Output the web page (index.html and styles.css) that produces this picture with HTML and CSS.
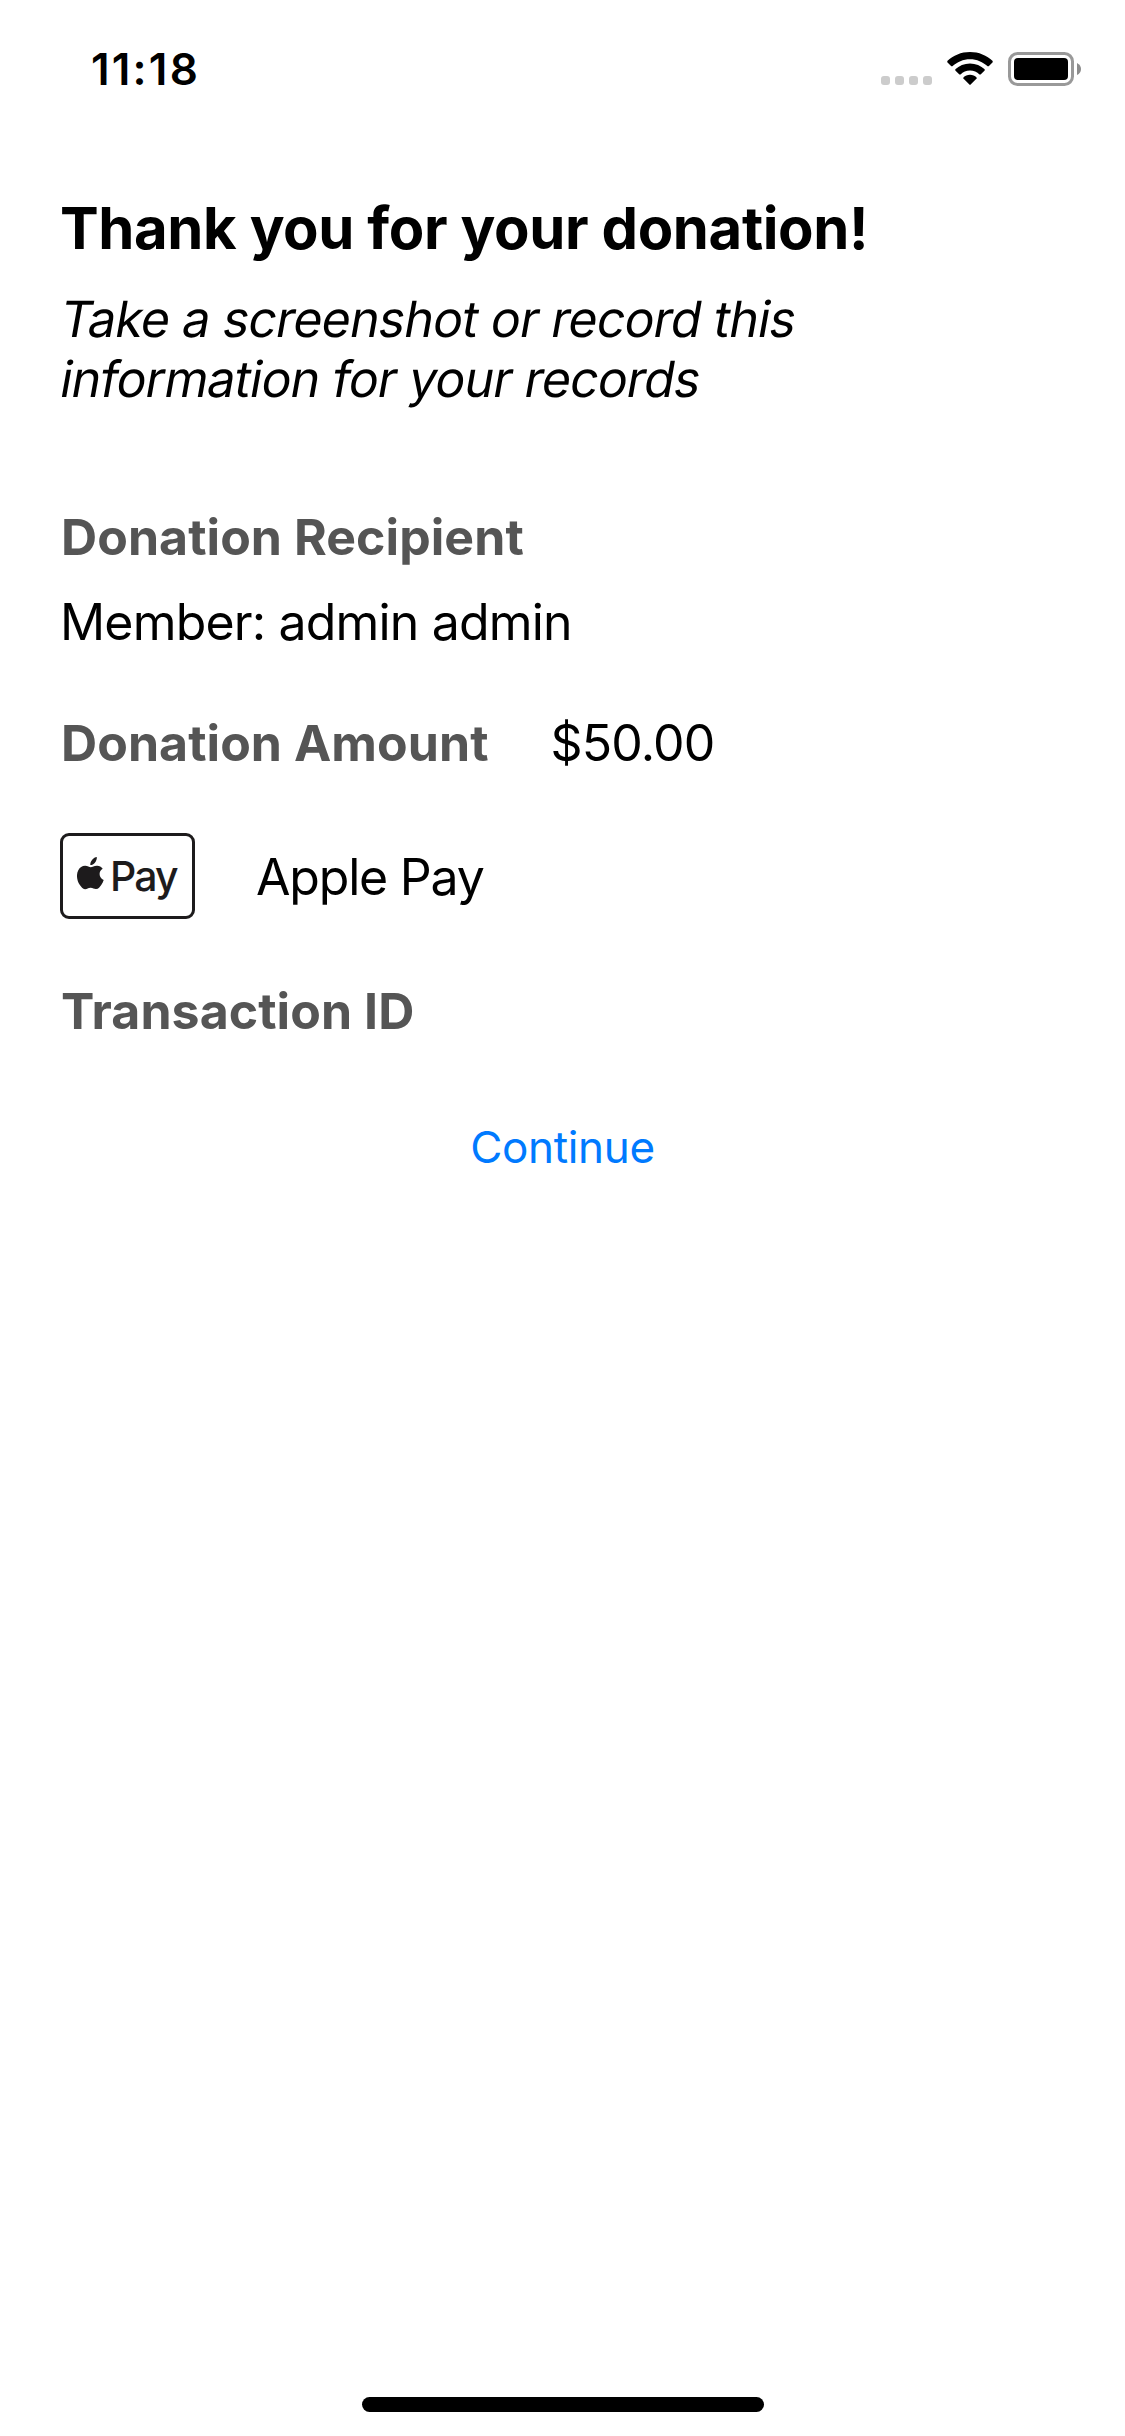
FILE: index.html
```html
<!DOCTYPE html>
<html lang="en">
<head>
<meta charset="utf-8">
<title>Donation receipt</title>
<link rel="stylesheet" href="styles.css">
</head>
<body>
<div class="screen">
  <header class="status-bar">
    <time class="clock">11:18</time>
    <div class="indicators">
      <div class="signal"><i></i><i></i><i></i><i></i></div>
      <svg class="wifi" width="46" height="34" viewBox="0 0 46 34">
        <path d="M23 0C31.8 0 39.8 3.400 45.700 9L45.700 10.300L41.700 14.300L40.600 14.300C36 9.900 29.800 7.200 23 7.200S10 9.900 5.400 14.300L4.300 14.300L.3 10.300L.3 9C6.200 3.400 14.200 0 23 0Z"/>
        <path d="M23 11.400C28.700 11.400 33.900 13.600 37.700 17.200L37.700 18.400L33.600 22.500L32.500 22.500C30 20.100 26.700 18.600 23 18.600S16 20.100 13.500 22.500L12.400 22.500L8.300 18.400L8.300 17.200C12.100 13.600 17.300 11.400 23 11.400Z"/>
        <path d="M23 22.800C25.600 22.800 27.900 23.800 29.600 25.400L29.600 26.500L23.600 32.600Q23 33.200 22.400 32.600L16.400 26.500L16.400 25.400C18.100 23.800 20.400 22.800 23 22.800Z"/>
      </svg>
      <svg class="battery" width="74" height="34" viewBox="0 0 74 34">
        <rect x="1.500" y="1.500" width="63" height="31" rx="8" fill="none" stroke="#999" stroke-width="3"/>
        <rect x="6" y="6" width="54" height="22" rx="4"/>
        <path d="M69 11Q73 13 73 17T69 23Z" fill="#8c8c8c"/>
      </svg>
    </div>
  </header>
  <main class="receipt">
    <h1 class="title">Thank you for your donation!</h1>
    <p class="hint"><span>Take a screenshot or record this</span><span>information for your records</span></p>
    <h2 class="label recipient-label">Donation Recipient</h2>
    <p class="value recipient">Member: admin admin</p>
    <div class="row amount-row">
      <h2 class="label">Donation Amount</h2>
      <p class="value amount">$50.00</p>
    </div>
    <div class="row method-row">
      <div class="pay-mark">
        <svg class="apple" width="27" height="33" viewBox="0 0 27 33">
          <path d="M19.800 0C20 2.200 19.200 4.200 17.900 5.800C16.600 7.300 14.900 8.200 13.300 8.100C13.100 6.100 13.900 4.100 15.200 2.700C16.400 1.200 18.300.1 19.800 0Z"/>
          <path d="M25.700 11.800C23.700 13 22.600 14.900 22.600 17.100C22.600 19.700 24.200 22 26.700 23C26.200 24.600 25.400 26.200 24.400 27.700C22.900 29.900 21.400 32.100 19.100 32.100C16.900 32.200 16.100 30.800 13.600 30.800C11 30.800 10.200 32.100 8.100 32.200C5.800 32.300 4.200 29.900 2.700 27.700C-.3 23.300-.9 17.300 1.300 13.200C2.700 10.500 5.300 8.800 8 8.800C10.500 8.700 12.300 10.200 13.800 10.200C15.300 10.200 17.500 8.500 20.300 8.700C22.300 8.800 24.400 9.800 25.700 11.800Z"/>
        </svg>
        <span class="pay-text">Pay</span>
      </div>
      <p class="value method">Apple Pay</p>
    </div>
    <h2 class="label transaction-label">Transaction ID</h2>
    <button class="continue" type="button">Continue</button>
  </main>
  <footer class="home"><div class="home-indicator"></div></footer>
</div>
</body>
</html>
```
FILE: styles.css
```css
* { box-sizing: border-box; margin: 0; padding: 0; }
body { background: #fff; color: #000; font-family: Inter, "Liberation Sans", sans-serif; }
.screen { width: 1125px; height: 2436px; display: flex; flex-direction: column; overflow: hidden; }
.status-bar { height: 132px; padding: 42px 43px 0 91px; display: flex; justify-content: space-between; align-items: flex-start; }
.clock { font-size: 44px; font-weight: 600; line-height: 54px; letter-spacing: 2.2px; }
.indicators { display: flex; align-items: flex-end; padding-top: 10px; height: 44px; }
.signal { display: flex; gap: 5px; margin: 0 15px 1px 0; }
.signal i { width: 9px; height: 9px; border-radius: 3px; background: #ccc; }
.wifi { margin-right: 15px; }
.receipt { flex: 1; padding: 60px 60px 0; display: flex; flex-direction: column; }
.title { font-size: 58px; font-weight: 700; line-height: 72px; letter-spacing: -0.39px; }
.hint { margin: 25px 0 0 -2px; font-size: 50px; line-height: 60px; letter-spacing: -0.83px; }
.hint span { display: block; transform: skewX(-10deg); transform-origin: 0 80%; }
.label { padding-left: 1px; font-size: 50px; font-weight: 700; line-height: 60px; color: #555; letter-spacing: 0.06px; }
.value { font-size: 50px; line-height: 60px; letter-spacing: -0.83px; }
.recipient-label { margin-top: 98px; }
.recipient { margin-top: 25px; }
.row { display: flex; align-items: center; }
.amount-row { margin-top: 61px; gap: 62px; }
.method-row { margin-top: 60px; gap: 61px; }
.method { padding-top: 2px; letter-spacing: -1.2px; }
.pay-mark { width: 135px; height: 86px; display: flex; align-items: center; gap: 6px; padding: 0 0 5px 14px; border: 3px solid #1d1b1c; border-radius: 9px; color: #1d1b1c; fill: #1d1b1c; }
.pay-text { padding-top: 4px; font-size: 41px; font-weight: 500; line-height: 50px; letter-spacing: -1.9px; }
.transaction-label { margin-top: 62px; }
.continue { align-self: center; margin-top: 79px; border: 0; background: none; color: #007aff; font: 400 44px/54px Inter, "Liberation Sans", sans-serif; letter-spacing: -0.35px; }
.home { height: 39px; display: flex; justify-content: center; }
.home-indicator { width: 402px; height: 15px; border-radius: 8px; background: #000; }
```
